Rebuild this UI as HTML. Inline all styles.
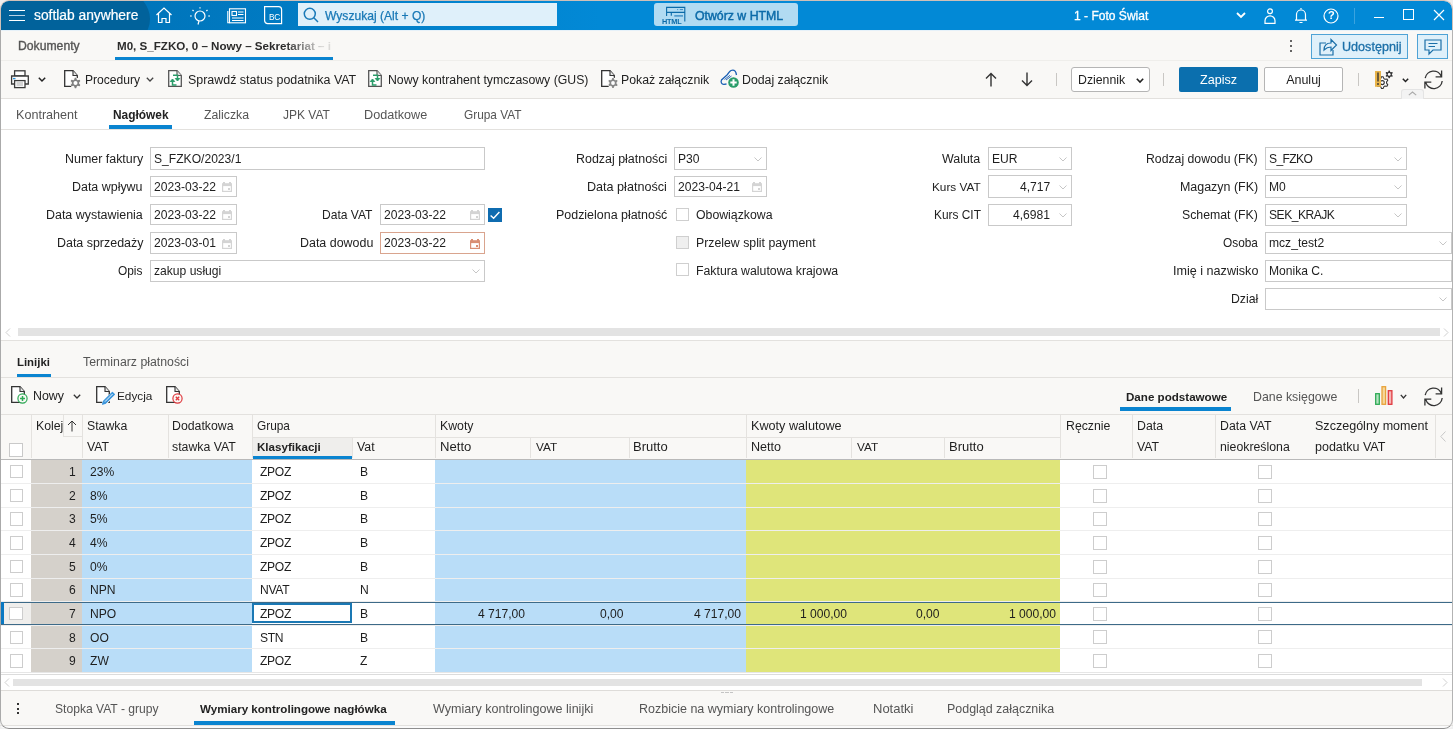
<!DOCTYPE html><html><head><meta charset="utf-8"><style>
html,body{margin:0;padding:0;width:1453px;height:729px;overflow:hidden;background:#efefef;}
#win{position:absolute;left:0;top:0;width:1453px;height:729px;}
.t{position:absolute;white-space:nowrap;font-family:"Liberation Sans", sans-serif;will-change:transform;}
.b{position:absolute;box-sizing:border-box;}
svg{position:absolute;overflow:visible;}
</style></head><body><div id="win">
<div class="b" style="left:0;top:0;width:1453px;height:729px;background:#fff;border-radius:9px;"></div>
<div class="b" style="left:1px;top:1px;width:1451px;height:29px;background:linear-gradient(90deg,#0075bb 149px,#0289d6 599px);border-radius:8px 8px 0 0;"></div>
<div class="b" style="left:1px;top:1px;width:160px;height:29px;overflow:hidden;border-radius:8px 0 0 0;"><div class="b" style="left:-51.5px;top:-32px;width:200px;height:100px;background:#01629b;border-radius:50%;"></div></div>
<div class="b" style="left:0px;top:30px;width:1453px;height:1px;background:#e6f1f9;"></div>
<div class="b" style="left:9px;top:10px;width:16px;height:1.4px;background:#fff;"></div>
<div class="b" style="left:9px;top:15px;width:16px;height:1.4px;background:#b9d3e6;"></div>
<div class="b" style="left:9px;top:20px;width:16px;height:1.4px;background:#fff;"></div>
<div class="t" style="left:34px;top:6.0px;line-height:20px;font-size:13.8px;color:#fff;font-weight:normal;-webkit-text-stroke:0.2px #fff;">softlab anywhere</div>
<svg style="left:155px;top:7px" width="18" height="17" viewBox="0 0 18 17" fill="none" stroke="#fff" stroke-width="1.2">
<path d="M1.5 8 L9 1 L16.5 8 M3.5 6.5 V15.5 H7 V11.5 H11 V15.5 H14.5 V6.5"/></svg>
<svg style="left:189px;top:6px" width="22" height="19" viewBox="0 0 22 19" fill="none" stroke="#fff" stroke-width="1.2">
<circle cx="11" cy="10" r="5"/><path d="M11 1.2 V2.6 M3.5 4 L4.6 5 M18.5 4 L17.4 5 M1 10 H2.8 M19.2 10 H21 M10 15 L9 18.5"/></svg>
<svg style="left:227px;top:8px" width="20" height="16" viewBox="0 0 20 16" fill="none" stroke="#fff" stroke-width="1.1">
<rect x="2.5" y="0.8" width="16" height="14"/><path d="M0.8 3 V14.8 H2.5"/><rect x="5" y="3.5" width="4.5" height="4"/><path d="M11 4 H16.5 M11 6.5 H16.5 M5 10 H16.5 M5 12.5 H16.5"/></svg>
<svg style="left:264px;top:6px" width="19" height="19" viewBox="0 0 19 19" fill="none" stroke="#fff" stroke-width="1.2">
<path d="M0.6 0.6 H14.6 A3 3 0 0 1 17.6 3.6 V17.6 H3.6 A3 3 0 0 1 0.6 14.6 Z"/></svg>
<div class="t" style="left:269.2px;top:7.399999999999999px;line-height:20px;font-size:8.3px;color:#fff;font-weight:normal;letter-spacing:-0.4px;">BC</div>
<div class="b" style="left:298px;top:3px;width:259px;height:23px;background:#dff0fa;"></div>
<svg style="left:303px;top:7px" width="16" height="16" viewBox="0 0 16 16" fill="none" stroke="#1a7ab8" stroke-width="1.5">
<circle cx="6.8" cy="6.8" r="5.5"/><path d="M10.8 10.8 L15 15"/></svg>
<div class="t" style="left:325px;top:5.5px;line-height:20px;font-size:12.1px;color:#1878b6;font-weight:normal;-webkit-text-stroke:0.25px #1878b6;">Wyszukaj (Alt + Q)</div>
<div class="b" style="left:654px;top:3px;width:144px;height:23px;background:#b1dbf2;border-radius:3px;"></div>
<svg style="left:660px;top:5px" width="28" height="22" viewBox="0 0 28 22" fill="none" stroke="#0b6aa8" stroke-width="1.1">
<path d="M6.6 10.9 V2.4 H24.8 V16.6 M6.6 7.4 H24.8 M11.3 7.4 V10.8"/><path d="M14.3 10.9 H23" stroke="#3b8cc4" stroke-width="1.4"/><path d="M17.2 4.6 H18.2 M19.8 4.6 H23" stroke="#3b8cc4" stroke-width="1"/></svg>
<div class="t" style="left:662.3px;top:11.600000000000001px;line-height:20px;font-size:7.3px;color:#0b6aa8;font-weight:bold;letter-spacing:-0.2px;">HTML</div>
<div class="t" style="left:695px;top:5.5px;line-height:20px;font-size:12.3px;color:#0b6aa8;font-weight:normal;-webkit-text-stroke:0.45px #0b6aa8;">Otwórz w HTML</div>
<div class="t" style="left:1073.5px;top:5.5px;line-height:20px;font-size:12.05px;color:#fff;font-weight:normal;-webkit-text-stroke:0.3px #fff;">1 - Foto Świat</div>
<svg style="left:1236px;top:12px" width="10" height="7" viewBox="0 0 10 7" fill="none" stroke="#fff" stroke-width="1.8"><path d="M1 1 L5 5 L9 1"/></svg>
<svg style="left:1263px;top:7px" width="14" height="17" viewBox="0 0 14 17" fill="none" stroke="#fff" stroke-width="1.2">
<circle cx="7" cy="4.3" r="2.4"/><path d="M2 16.3 V13.8 A5 5 0 0 1 12 13.8 V16.3 Z"/></svg>
<svg style="left:1294px;top:7px" width="14" height="17" viewBox="0 0 14 17" fill="none" stroke="#fff" stroke-width="1.2">
<path d="M7 1 V2.2 M2.5 13 V7.5 A4.5 4.5 0 0 1 11.5 7.5 V13 M1 13.2 H13 M5.5 15.5 H8.5"/></svg>
<svg style="left:1323px;top:7.8px" width="16" height="16" viewBox="0 0 16 16" fill="none" stroke="#fff" stroke-width="1.2">
<circle cx="8" cy="8" r="7"/></svg>
<div class="t" style="left:1327.5px;top:5.0px;line-height:20px;font-size:11px;color:#fff;font-weight:bold;">?</div>
<div class="b" style="left:1354px;top:8px;width:1px;height:16px;background:#3aa3df;"></div>
<div class="b" style="left:1374px;top:17px;width:10px;height:1.3px;background:#fff;"></div>
<div class="b" style="left:1403px;top:9px;width:11px;height:11px;border:1.3px solid #fff;"></div>
<svg style="left:1433px;top:9px" width="12" height="12" viewBox="0 0 12 12" fill="none" stroke="#fff" stroke-width="1.2"><path d="M1 1 L11 11 M11 1 L1 11"/></svg>
<div class="b" style="left:0px;top:31px;width:1453px;height:30px;background:#f9f8f6;"></div>
<div class="b" style="left:0px;top:60px;width:1453px;height:1px;background:#efeeeb;"></div>
<div class="t" style="left:18px;top:36.0px;line-height:20px;font-size:12.2px;color:#555;font-weight:normal;-webkit-text-stroke:0.35px #555;">Dokumenty</div>
<div class="t" style="left:117px;top:36.0px;line-height:20px;font-size:11.6px;color:#2b2b2b;font-weight:bold;width:216px;overflow:hidden;-webkit-mask-image:linear-gradient(90deg,#000 78%,rgba(0,0,0,0.15) 95%);">M0, S_FZKO, 0 – Nowy – Sekretariat – i</div>
<div class="b" style="left:115px;top:57px;width:218px;height:3px;background:#0a84d0;"></div>
<div class="b" style="left:1289.5px;top:40px;width:2px;height:2px;background:#333;border-radius:1px;"></div>
<div class="b" style="left:1289.5px;top:45px;width:2px;height:2px;background:#333;border-radius:1px;"></div>
<div class="b" style="left:1289.5px;top:50px;width:2px;height:2px;background:#333;border-radius:1px;"></div>
<div class="b" style="left:1311px;top:34px;width:97px;height:25px;background:#dff0fa;border:1px solid #4fa3d6;"></div>
<svg style="left:1318px;top:37px" width="20" height="19" viewBox="0 0 20 19" fill="none" stroke="#1b6fa8" stroke-width="1.2">
<path d="M8 6 H2 V18 H15 V13 M6 13 C6 8 9 6 13 6 V2.5 L18.5 8 L13 13.5 V10 C10 10 8 11 6 13 Z"/></svg>
<div class="t" style="left:1341.5px;top:36.5px;line-height:20px;font-size:12.6px;color:#1b6fa8;font-weight:normal;-webkit-text-stroke:0.3px #1b6fa8;">Udostępnij</div>
<div class="b" style="left:1417px;top:34px;width:31px;height:25px;background:#dff0fa;border:1px solid #4fa3d6;"></div>
<svg style="left:1424px;top:39px" width="18" height="16" viewBox="0 0 18 16" fill="none" stroke="#1b6fa8" stroke-width="1.2">
<path d="M1 1 H17 V11 H9 L5 15 V11 H1 Z M4.5 4.5 H13.5 M4.5 7.5 H11"/></svg>
<div class="b" style="left:0px;top:61px;width:1453px;height:37px;background:#f9f8f6;"></div>
<div class="b" style="left:0px;top:98px;width:1453px;height:1px;background:#e3e1de;"></div>
<svg style="left:10px;top:70px" width="20" height="19" viewBox="0 0 20 19" fill="none" stroke="#3a3a3a" stroke-width="1.3">
<rect x="4.6" y="0.8" width="10.4" height="5.2" fill="#fff"/><path d="M4.6 14 H1.6 V6 H18.3 V14 H15" fill="#fff"/><rect x="4.6" y="10.6" width="10.4" height="7" fill="#fff"/>
<path d="M6.5 13 H13 M6.5 15 H13" stroke="#aaa" stroke-width="1.2"/><path d="M3 8.6 H5.5" stroke="#2a8fd6" stroke-width="1.4"/></svg>
<svg style="left:38px;top:77px" width="8" height="5" viewBox="0 0 8 5" fill="none" stroke="#222" stroke-width="1.5"><path d="M0.8 0.8 L4.0 4 L7.2 0.8"/></svg>
<svg style="left:64px;top:70px" width="20" height="20" viewBox="0 0 20 20"><path d="M0.7 0.7 H9 L13.3 5.5 V16.3 H0.7 Z" stroke="#333" stroke-width="1.3" fill="#fff"/><path d="M9 0.7 V5.5 H13.3" stroke="#333" stroke-width="1.1" fill="#e6e6e6"/>
<circle cx="11.5" cy="13" r="5.6" fill="#f9f8f6"/><path d="M10.82 7.84 L12.18 7.84 L12.88 9.67 L13.69 10.14 L15.63 9.83 L16.30 11.01 L15.07 12.53 L15.07 13.47 L16.30 14.99 L15.63 16.17 L13.69 15.86 L12.88 16.33 L12.18 18.16 L10.82 18.16 L10.12 16.33 L9.31 15.86 L7.37 16.17 L6.70 14.99 L7.93 13.47 L7.93 12.53 L6.70 11.01 L7.37 9.83 L9.31 10.14 L10.12 9.67 Z" fill="#808080" stroke="#f9f8f6" stroke-width="0"/><circle cx="11.5" cy="13" r="2.0" fill="#fff"/></svg>
<div class="t" style="left:84.5px;top:70.0px;line-height:20px;font-size:12.1px;color:#222;font-weight:normal;">Procedury</div>
<svg style="left:146px;top:77px" width="8" height="5" viewBox="0 0 8 5" fill="none" stroke="#444" stroke-width="1.3"><path d="M0.8 0.8 L4.0 4 L7.2 0.8"/></svg>
<svg style="left:168px;top:70px" width="15" height="18" viewBox="0 0 15 18"><path d="M0.7 0.7 H9 L13.3 5.5 V16.3 H0.7 Z" stroke="#555" stroke-width="1.3" fill="#fff"/><path d="M9 0.7 V5.5 H13.3" stroke="#555" stroke-width="1.1" fill="#e6e6e6"/>
<path d="M5 5.3 H9.5 V9" stroke="#2a9d6a" stroke-width="1.5" fill="none"/><path d="M7.3 8.5 L9.5 11 L11.7 8.5 Z" fill="#2a9d6a" stroke="#2a9d6a" stroke-width="1"/>
<path d="M8.5 15 H4.5 V11" stroke="#2a9d6a" stroke-width="1.5" fill="none"/><path d="M2.3 11.5 L4.5 9 L6.7 11.5 Z" fill="#2a9d6a" stroke="#2a9d6a" stroke-width="1"/></svg>
<div class="t" style="left:188px;top:70.0px;line-height:20px;font-size:12.45px;color:#222;font-weight:normal;">Sprawdź status podatnika VAT</div>
<svg style="left:368px;top:70px" width="15" height="18" viewBox="0 0 15 18"><path d="M0.7 0.7 H9 L13.3 5.5 V16.3 H0.7 Z" stroke="#555" stroke-width="1.3" fill="#fff"/><path d="M9 0.7 V5.5 H13.3" stroke="#555" stroke-width="1.1" fill="#e6e6e6"/>
<path d="M5 5.3 H9.5 V9" stroke="#2a9d6a" stroke-width="1.5" fill="none"/><path d="M7.3 8.5 L9.5 11 L11.7 8.5 Z" fill="#2a9d6a" stroke="#2a9d6a" stroke-width="1"/>
<path d="M8.5 15 H4.5 V11" stroke="#2a9d6a" stroke-width="1.5" fill="none"/><path d="M2.3 11.5 L4.5 9 L6.7 11.5 Z" fill="#2a9d6a" stroke="#2a9d6a" stroke-width="1"/></svg>
<div class="t" style="left:388px;top:70.0px;line-height:20px;font-size:12.28px;color:#222;font-weight:normal;">Nowy kontrahent tymczasowy (GUS)</div>
<svg style="left:601px;top:70px" width="20" height="20" viewBox="0 0 20 20"><path d="M0.7 0.7 H9 L13.3 5.5 V16.3 H0.7 Z" stroke="#333" stroke-width="1.3" fill="#fff"/><path d="M9 0.7 V5.5 H13.3" stroke="#333" stroke-width="1.1" fill="#e6e6e6"/>
<circle cx="12" cy="13" r="5.6" fill="#f9f8f6"/><path d="M11.35 8.04 L12.65 8.04 L13.34 9.77 L14.13 10.22 L15.97 9.96 L16.62 11.09 L15.47 12.54 L15.47 13.46 L16.62 14.91 L15.97 16.04 L14.13 15.78 L13.34 16.23 L12.65 17.96 L11.35 17.96 L10.66 16.23 L9.87 15.78 L8.03 16.04 L7.38 14.91 L8.53 13.46 L8.53 12.54 L7.38 11.09 L8.03 9.96 L9.87 10.22 L10.66 9.77 Z" fill="#888" stroke="#f9f8f6" stroke-width="0"/><circle cx="12" cy="13" r="1.9" fill="#fff"/></svg>
<div class="t" style="left:621px;top:70.0px;line-height:20px;font-size:12.3px;color:#222;font-weight:normal;">Pokaż załącznik</div>
<svg style="left:720px;top:69px" width="20" height="19" viewBox="0 0 20 19" fill="none">
<path d="M6.5 15 L4 15.3 C1.5 15.5 0.5 13 1.5 11 L7 6 C8.5 4.5 9 2.5 11 1.5 C13 0.7 15.5 1 16 4 L16.5 6" stroke="#1a5fb4" stroke-width="1.3"/>
<path d="M4.5 10.5 L10 6.3 M6 11 L11.5 7" stroke="#1a5fb4" stroke-width="0.9"/>
<circle cx="13.5" cy="13.5" r="5.3" fill="#2a9d6a"/><path d="M13.5 10.3 V16.7 M10.3 13.5 H16.7" stroke="#fff" stroke-width="2"/></svg>
<div class="t" style="left:742px;top:70.0px;line-height:20px;font-size:12.3px;color:#222;font-weight:normal;">Dodaj załącznik</div>
<svg style="left:985px;top:72px" width="12" height="15" viewBox="0 0 12 15" fill="none" stroke="#333" stroke-width="1.4"><path d="M6 14.5 V1.5 M1 6.5 L6 1.5 L11 6.5"/></svg>
<svg style="left:1021px;top:72px" width="12" height="15" viewBox="0 0 12 15" fill="none" stroke="#333" stroke-width="1.4"><path d="M6 0.5 V13.5 M1 8.5 L6 13.5 L11 8.5"/></svg>
<div class="b" style="left:1056px;top:73px;width:1px;height:13px;background:#c9c7c4;"></div>
<div class="b" style="left:1071px;top:67px;width:79px;height:25px;background:#fff;border:1px solid #b5b5b5;border-radius:3px;"></div>
<div class="t" style="left:1077.5px;top:70.2px;line-height:20px;font-size:12.3px;color:#1e1e1e;font-weight:normal;">Dziennik</div>
<svg style="left:1136px;top:78px" width="8" height="5" viewBox="0 0 8 5" fill="none" stroke="#222" stroke-width="1.6"><path d="M0.8 0.8 L4.0 4 L7.2 0.8"/></svg>
<div class="b" style="left:1163px;top:73px;width:1px;height:13px;background:#c9c7c4;"></div>
<div class="b" style="left:1179px;top:67px;width:79px;height:25px;background:#0b6fae;border-radius:2px;"></div>
<div class="t" style="left:1179px;top:70.0px;line-height:20px;font-size:12.6px;color:#fff;font-weight:normal;width:79px;text-align:center;">Zapisz</div>
<div class="b" style="left:1264px;top:67px;width:79px;height:25px;background:#fff;border:1px solid #b5b5b5;border-radius:2px;"></div>
<div class="t" style="left:1264px;top:70.0px;line-height:20px;font-size:12.5px;color:#1e1e1e;font-weight:normal;width:79px;text-align:center;">Anuluj</div>
<div class="b" style="left:1358px;top:73px;width:1px;height:13px;background:#c9c7c4;"></div>
<svg style="left:1374px;top:70px" width="22" height="19" viewBox="0 0 22 19">
<path d="M7.53 6.75 L9.07 6.75 L9.95 8.63 L10.92 9.19 L12.98 9.01 L13.75 10.34 L12.56 12.04 L12.56 13.16 L13.75 14.86 L12.98 16.19 L10.92 16.01 L9.95 16.57 L9.07 18.45 L7.53 18.45 L6.65 16.57 L5.68 16.01 L3.62 16.19 L2.85 14.86 L4.04 13.16 L4.04 12.04 L2.85 10.34 L3.62 9.01 L5.68 9.19 L6.65 8.63 Z" fill="#fff" stroke="#333" stroke-width="1.1"/><circle cx="8.3" cy="12.6" r="2" fill="none" stroke="#333" stroke-width="1.1"/><path d="M14.69 0.53 L15.71 0.53 L16.23 1.91 L16.84 2.26 L18.29 2.03 L18.80 2.91 L17.88 4.05 L17.88 4.75 L18.80 5.89 L18.29 6.77 L16.84 6.54 L16.23 6.89 L15.71 8.27 L14.69 8.27 L14.17 6.89 L13.56 6.54 L12.11 6.77 L11.60 5.89 L12.52 4.75 L12.52 4.05 L11.60 2.91 L12.11 2.03 L13.56 2.26 L14.17 1.91 Z" fill="#333"/><circle cx="15.2" cy="4.4" r="1.4" fill="#fff"/>
<circle cx="8.3" cy="12.6" r="3.1" fill="none" stroke="#fff" stroke-width="0"/>
<rect x="1" y="1" width="6" height="15.8" fill="#e8b44a"/><rect x="3" y="2.5" width="2" height="9" fill="#6b5a3a"/><rect x="3" y="13" width="2" height="2" fill="#6b5a3a"/></svg>
<svg style="left:1402px;top:78px" width="7" height="4.5" viewBox="0 0 7 4.5" fill="none" stroke="#222" stroke-width="1.5"><path d="M0.8 0.8 L3.5 3.5 L6.2 0.8"/></svg>
<svg style="left:1424px;top:70px" width="20" height="20" viewBox="0 0 20 20" fill="none" stroke="#333" stroke-width="1.3">
<path d="M1.2 8.2 A8.4 8.4 0 0 1 17.4 6.6 M18.2 11 A8.4 8.4 0 0 1 1.8 12.6 M17.6 0.6 V6.8 H11.6 M0.9 18.6 V12.1 H7.3"/></svg>
<div class="b" style="left:1401px;top:89px;width:23px;height:10px;background:#f3f3f3;border:1px solid #e4e4e4;border-bottom:none;border-radius:3px 3px 0 0;"></div>
<svg style="left:1408px;top:91px" width="9" height="5" viewBox="0 0 9 5" fill="none" stroke="#aaa" stroke-width="1.1"><path d="M0.8 4.2 L4.5 1 L8.2 4.2"/></svg>
<div class="b" style="left:0px;top:99px;width:1453px;height:30px;background:#fff;"></div>
<div class="b" style="left:0px;top:129px;width:1453px;height:1px;background:#e3e1de;"></div>
<div class="t" style="left:15.5px;top:105.0px;line-height:20px;font-size:12.6px;color:#555;font-weight:normal;">Kontrahent</div>
<div class="t" style="left:204px;top:105.0px;line-height:20px;font-size:12.3px;color:#555;font-weight:normal;">Zaliczka</div>
<div class="t" style="left:283px;top:105.0px;line-height:20px;font-size:12.0px;color:#555;font-weight:normal;">JPK VAT</div>
<div class="t" style="left:364px;top:105.0px;line-height:20px;font-size:12.65px;color:#555;font-weight:normal;">Dodatkowe</div>
<div class="t" style="left:463.5px;top:105.0px;line-height:20px;font-size:11.85px;color:#555;font-weight:normal;">Grupa VAT</div>
<div class="t" style="left:112.5px;top:105.0px;line-height:20px;font-size:11.9px;color:#222;font-weight:bold;">Nagłówek</div>
<div class="b" style="left:109px;top:125px;width:63px;height:4px;background:#0a84d0;"></div>
<div class="t" style="right:1310px;top:149.0px;line-height:20px;font-size:12.45px;color:#222;font-weight:normal;text-align:right;">Numer faktury</div>
<div class="b" style="left:150px;top:147px;width:335px;height:23px;background:#fff;border:1px solid #c9c9c9;"></div>
<div class="t" style="left:154px;top:148.5px;line-height:20px;font-size:12.1px;color:#1e1e1e;font-weight:normal;letter-spacing:0px;">S_FZKO/2023/1</div>
<div class="t" style="right:1310px;top:177.0px;line-height:20px;font-size:12.45px;color:#222;font-weight:normal;text-align:right;">Data wpływu</div>
<div class="b" style="left:150px;top:176px;width:87px;height:21px;background:#fff;border:1px solid #c9c9c9;"></div>
<div class="t" style="left:154px;top:176.5px;line-height:20px;font-size:12.1px;color:#1e1e1e;font-weight:normal;letter-spacing:0px;">2023-03-22</div>
<svg style="left:222px;top:182.0px" width="10" height="10" viewBox="0 0 10 10" fill="none">
<rect x="0.6" y="2" width="8.8" height="7.4" stroke="#d4d4d4" stroke-width="1.2"/><rect x="0" y="1.5" width="10" height="2.6" fill="#d4d4d4"/><rect x="1" y="0" width="2" height="2" fill="#d4d4d4"/><rect x="7" y="0" width="2" height="2" fill="#d4d4d4"/><rect x="6" y="6" width="2" height="2" fill="#d4d4d4"/></svg>
<div class="t" style="right:1310px;top:205.0px;line-height:20px;font-size:12.45px;color:#222;font-weight:normal;text-align:right;">Data wystawienia</div>
<div class="b" style="left:150px;top:204px;width:87px;height:21px;background:#fff;border:1px solid #c9c9c9;"></div>
<div class="t" style="left:154px;top:204.5px;line-height:20px;font-size:12.1px;color:#1e1e1e;font-weight:normal;letter-spacing:0px;">2023-03-22</div>
<svg style="left:222px;top:210.0px" width="10" height="10" viewBox="0 0 10 10" fill="none">
<rect x="0.6" y="2" width="8.8" height="7.4" stroke="#d4d4d4" stroke-width="1.2"/><rect x="0" y="1.5" width="10" height="2.6" fill="#d4d4d4"/><rect x="1" y="0" width="2" height="2" fill="#d4d4d4"/><rect x="7" y="0" width="2" height="2" fill="#d4d4d4"/><rect x="6" y="6" width="2" height="2" fill="#d4d4d4"/></svg>
<div class="t" style="right:1310px;top:233.0px;line-height:20px;font-size:12.45px;color:#222;font-weight:normal;text-align:right;">Data sprzedaży</div>
<div class="b" style="left:150px;top:232px;width:87px;height:22px;background:#fff;border:1px solid #c9c9c9;"></div>
<div class="t" style="left:154px;top:233.0px;line-height:20px;font-size:12.1px;color:#1e1e1e;font-weight:normal;letter-spacing:0px;">2023-03-01</div>
<svg style="left:222px;top:238.5px" width="10" height="10" viewBox="0 0 10 10" fill="none">
<rect x="0.6" y="2" width="8.8" height="7.4" stroke="#d4d4d4" stroke-width="1.2"/><rect x="0" y="1.5" width="10" height="2.6" fill="#d4d4d4"/><rect x="1" y="0" width="2" height="2" fill="#d4d4d4"/><rect x="7" y="0" width="2" height="2" fill="#d4d4d4"/><rect x="6" y="6" width="2" height="2" fill="#d4d4d4"/></svg>
<div class="t" style="right:1310.5px;top:261.0px;line-height:20px;font-size:11.9px;color:#222;font-weight:normal;text-align:right;">Opis</div>
<div class="b" style="left:150px;top:260px;width:335px;height:22px;background:#fff;border:1px solid #c9c9c9;"></div>
<div class="t" style="left:154px;top:261.0px;line-height:20px;font-size:12.1px;color:#1e1e1e;font-weight:normal;letter-spacing:0px;">zakup usługi</div>
<svg style="left:471.5px;top:269.0px" width="8" height="5" viewBox="0 0 8 5" fill="none" stroke="#c6c6c6" stroke-width="1"><path d="M0.5 0.5 L4 4 L7.5 0.5"/></svg>
<div class="t" style="right:1080.5px;top:205.0px;line-height:20px;font-size:12.05px;color:#222;font-weight:normal;text-align:right;">Data VAT</div>
<div class="b" style="left:380px;top:204px;width:105px;height:21px;background:#fff;border:1px solid #c9c9c9;"></div>
<div class="t" style="left:384px;top:204.5px;line-height:20px;font-size:12.1px;color:#1e1e1e;font-weight:normal;letter-spacing:0px;">2023-03-22</div>
<svg style="left:470px;top:210.0px" width="10" height="10" viewBox="0 0 10 10" fill="none">
<rect x="0.6" y="2" width="8.8" height="7.4" stroke="#d4d4d4" stroke-width="1.2"/><rect x="0" y="1.5" width="10" height="2.6" fill="#d4d4d4"/><rect x="1" y="0" width="2" height="2" fill="#d4d4d4"/><rect x="7" y="0" width="2" height="2" fill="#d4d4d4"/><rect x="6" y="6" width="2" height="2" fill="#d4d4d4"/></svg>
<div class="t" style="right:1080px;top:233.0px;line-height:20px;font-size:12.45px;color:#222;font-weight:normal;text-align:right;">Data dowodu</div>
<div class="b" style="left:380px;top:232px;width:105px;height:22px;background:#fff;border:1px solid #d9a48e;"></div>
<div class="t" style="left:384px;top:233.0px;line-height:20px;font-size:12.1px;color:#1e1e1e;font-weight:normal;letter-spacing:0px;">2023-03-22</div>
<svg style="left:470px;top:238.5px" width="10" height="10" viewBox="0 0 10 10" fill="none">
<rect x="0.6" y="2" width="8.8" height="7.4" stroke="#d98f74" stroke-width="1.2"/><rect x="0" y="1.5" width="10" height="2.6" fill="#d98f74"/><rect x="1" y="0" width="2" height="2" fill="#d98f74"/><rect x="7" y="0" width="2" height="2" fill="#d98f74"/><rect x="6" y="6" width="2" height="2" fill="#d98f74"/></svg>
<div class="b" style="left:488px;top:208px;width:14px;height:14px;background:#0f6cb0;"></div>
<svg style="left:490px;top:210px" width="10" height="10" viewBox="0 0 10 10" fill="none" stroke="#fff" stroke-width="1.4"><path d="M0.6 5.6 L3.6 8.3 L9.4 2"/></svg>
<div class="t" style="right:786px;top:149.0px;line-height:20px;font-size:12.45px;color:#222;font-weight:normal;text-align:right;">Rodzaj płatności</div>
<div class="b" style="left:674px;top:147px;width:93px;height:23px;background:#fff;border:1px solid #c9c9c9;"></div>
<div class="t" style="left:678px;top:148.5px;line-height:20px;font-size:12.1px;color:#1e1e1e;font-weight:normal;letter-spacing:0px;">P30</div>
<svg style="left:753.5px;top:156.5px" width="8" height="5" viewBox="0 0 8 5" fill="none" stroke="#c6c6c6" stroke-width="1"><path d="M0.5 0.5 L4 4 L7.5 0.5"/></svg>
<div class="t" style="right:786px;top:177.0px;line-height:20px;font-size:12.6px;color:#222;font-weight:normal;text-align:right;">Data płatności</div>
<div class="b" style="left:674px;top:176px;width:93px;height:21px;background:#fff;border:1px solid #c9c9c9;"></div>
<div class="t" style="left:678px;top:176.5px;line-height:20px;font-size:12.1px;color:#1e1e1e;font-weight:normal;letter-spacing:0px;">2023-04-21</div>
<svg style="left:752px;top:182.0px" width="10" height="10" viewBox="0 0 10 10" fill="none">
<rect x="0.6" y="2" width="8.8" height="7.4" stroke="#d4d4d4" stroke-width="1.2"/><rect x="0" y="1.5" width="10" height="2.6" fill="#d4d4d4"/><rect x="1" y="0" width="2" height="2" fill="#d4d4d4"/><rect x="7" y="0" width="2" height="2" fill="#d4d4d4"/><rect x="6" y="6" width="2" height="2" fill="#d4d4d4"/></svg>
<div class="t" style="right:786px;top:205.0px;line-height:20px;font-size:12.45px;color:#222;font-weight:normal;text-align:right;">Podzielona płatność</div>
<div class="b" style="left:676px;top:208px;width:13px;height:13px;background:#fff;border:1px solid #cfcfcf;"></div>
<div class="t" style="left:696px;top:205.0px;line-height:20px;font-size:12.3px;color:#222;font-weight:normal;">Obowiązkowa</div>
<div class="b" style="left:676px;top:236px;width:13px;height:13px;background:#efefef;border:1px solid #cfcfcf;"></div>
<div class="t" style="left:696px;top:233.0px;line-height:20px;font-size:12.3px;color:#222;font-weight:normal;">Przelew split payment</div>
<div class="b" style="left:676px;top:263px;width:13px;height:13px;background:#fff;border:1px solid #cfcfcf;"></div>
<div class="t" style="left:696px;top:260.5px;line-height:20px;font-size:12.3px;color:#222;font-weight:normal;">Faktura walutowa krajowa</div>
<div class="t" style="right:473px;top:149.0px;line-height:20px;font-size:12.45px;color:#222;font-weight:normal;text-align:right;">Waluta</div>
<div class="b" style="left:988px;top:147px;width:84px;height:23px;background:#fff;border:1px solid #c9c9c9;"></div>
<div class="t" style="left:992px;top:148.5px;line-height:20px;font-size:12.1px;color:#1e1e1e;font-weight:normal;letter-spacing:0px;">EUR</div>
<svg style="left:1058.5px;top:156.5px" width="8" height="5" viewBox="0 0 8 5" fill="none" stroke="#c6c6c6" stroke-width="1"><path d="M0.5 0.5 L4 4 L7.5 0.5"/></svg>
<div class="t" style="right:472.5px;top:177.0px;line-height:20px;font-size:11.8px;color:#222;font-weight:normal;text-align:right;">Kurs VAT</div>
<div class="b" style="left:988px;top:175px;width:84px;height:23px;background:#fff;border:1px solid #c9c9c9;"></div>
<div class="t" style="right:403px;top:176.5px;line-height:20px;font-size:12.1px;color:#1e1e1e;font-weight:normal;text-align:right;">4,717</div>
<svg style="left:1058.5px;top:184.5px" width="8" height="5" viewBox="0 0 8 5" fill="none" stroke="#c6c6c6" stroke-width="1"><path d="M0.5 0.5 L4 4 L7.5 0.5"/></svg>
<div class="t" style="right:472.5px;top:205.0px;line-height:20px;font-size:11.9px;color:#222;font-weight:normal;text-align:right;">Kurs CIT</div>
<div class="b" style="left:988px;top:204px;width:84px;height:22px;background:#fff;border:1px solid #c9c9c9;"></div>
<div class="t" style="right:403px;top:205.0px;line-height:20px;font-size:12.1px;color:#1e1e1e;font-weight:normal;text-align:right;">4,6981</div>
<svg style="left:1058.5px;top:213.0px" width="8" height="5" viewBox="0 0 8 5" fill="none" stroke="#c6c6c6" stroke-width="1"><path d="M0.5 0.5 L4 4 L7.5 0.5"/></svg>
<div class="t" style="right:195px;top:149.0px;line-height:20px;font-size:12.25px;color:#222;font-weight:normal;text-align:right;">Rodzaj dowodu (FK)</div>
<div class="b" style="left:1265px;top:147px;width:142px;height:23px;background:#fff;border:1px solid #c9c9c9;"></div>
<div class="t" style="left:1269px;top:148.5px;line-height:20px;font-size:12.1px;color:#1e1e1e;font-weight:normal;letter-spacing:-0.65px;">S_FZKO</div>
<svg style="left:1393.5px;top:156.5px" width="8" height="5" viewBox="0 0 8 5" fill="none" stroke="#c6c6c6" stroke-width="1"><path d="M0.5 0.5 L4 4 L7.5 0.5"/></svg>
<div class="t" style="right:195px;top:177.0px;line-height:20px;font-size:12.45px;color:#222;font-weight:normal;text-align:right;">Magazyn (FK)</div>
<div class="b" style="left:1265px;top:175px;width:142px;height:23px;background:#fff;border:1px solid #c9c9c9;"></div>
<div class="t" style="left:1269px;top:176.5px;line-height:20px;font-size:12.1px;color:#1e1e1e;font-weight:normal;letter-spacing:0px;">M0</div>
<svg style="left:1393.5px;top:184.5px" width="8" height="5" viewBox="0 0 8 5" fill="none" stroke="#c6c6c6" stroke-width="1"><path d="M0.5 0.5 L4 4 L7.5 0.5"/></svg>
<div class="t" style="right:195px;top:205.0px;line-height:20px;font-size:12.3px;color:#222;font-weight:normal;text-align:right;">Schemat (FK)</div>
<div class="b" style="left:1265px;top:204px;width:142px;height:22px;background:#fff;border:1px solid #c9c9c9;"></div>
<div class="t" style="left:1269px;top:205.0px;line-height:20px;font-size:12.1px;color:#1e1e1e;font-weight:normal;letter-spacing:-0.5px;">SEK_KRAJK</div>
<svg style="left:1393.5px;top:213.0px" width="8" height="5" viewBox="0 0 8 5" fill="none" stroke="#c6c6c6" stroke-width="1"><path d="M0.5 0.5 L4 4 L7.5 0.5"/></svg>
<div class="t" style="right:195px;top:233.0px;line-height:20px;font-size:11.85px;color:#222;font-weight:normal;text-align:right;">Osoba</div>
<div class="b" style="left:1265px;top:232px;width:187px;height:22px;background:#fff;border:1px solid #c9c9c9;"></div>
<div class="t" style="left:1269px;top:233.0px;line-height:20px;font-size:12.1px;color:#1e1e1e;font-weight:normal;letter-spacing:0px;">mcz_test2</div>
<svg style="left:1438.5px;top:241.0px" width="8" height="5" viewBox="0 0 8 5" fill="none" stroke="#c6c6c6" stroke-width="1"><path d="M0.5 0.5 L4 4 L7.5 0.5"/></svg>
<div class="t" style="right:195px;top:261.0px;line-height:20px;font-size:12.6px;color:#222;font-weight:normal;text-align:right;">Imię i nazwisko</div>
<div class="b" style="left:1265px;top:260px;width:187px;height:22px;background:#fff;border:1px solid #c9c9c9;"></div>
<div class="t" style="left:1269px;top:261.0px;line-height:20px;font-size:12.1px;color:#1e1e1e;font-weight:normal;letter-spacing:0px;">Monika C.</div>
<div class="t" style="right:195px;top:289.0px;line-height:20px;font-size:12.25px;color:#222;font-weight:normal;text-align:right;">Dział</div>
<div class="b" style="left:1265px;top:288px;width:187px;height:22px;background:#fff;border:1px solid #c9c9c9;"></div>
<svg style="left:1438.5px;top:297.0px" width="8" height="5" viewBox="0 0 8 5" fill="none" stroke="#c6c6c6" stroke-width="1"><path d="M0.5 0.5 L4 4 L7.5 0.5"/></svg>
<div class="b" style="left:18px;top:328px;width:1422px;height:8px;background:#e3e3e3;"></div>
<svg style="left:5px;top:328px" width="6" height="9" viewBox="0 0 6 9" fill="none" stroke="#d0d0d0" stroke-width="1"><path d="M5 0.5 L1 4.5 L5 8.5"/></svg>
<svg style="left:1443px;top:328px" width="6" height="9" viewBox="0 0 6 9" fill="none" stroke="#d0d0d0" stroke-width="1"><path d="M1 0.5 L5 4.5 L1 8.5"/></svg>
<div class="b" style="left:0px;top:340px;width:1453px;height:1px;background:#e3e1de;"></div>
<div class="b" style="left:0px;top:341px;width:1453px;height:73px;background:#f9f8f6;"></div>
<div class="t" style="left:16.5px;top:352.0px;line-height:20px;font-size:11.4px;color:#222;font-weight:bold;">Linijki</div>
<div class="t" style="left:83px;top:352.0px;line-height:20px;font-size:12.3px;color:#555;font-weight:normal;">Terminarz płatności</div>
<div class="b" style="left:17px;top:374px;width:34px;height:4px;background:#0a84d0;"></div>
<div class="b" style="left:0px;top:377px;width:1453px;height:1px;background:#e3e1de;"></div>
<svg style="left:11px;top:386px" width="19" height="18" viewBox="0 0 19 18"><path d="M0.7 0.7 H9 L13.3 5.5 V16.3 H0.7 Z" stroke="#333" stroke-width="1.3" fill="#fff"/><path d="M9 0.7 V5.5 H13.3" stroke="#333" stroke-width="1.1" fill="#e6e6e6"/>
<circle cx="11.5" cy="12.5" r="4.6" fill="#f9f8f6" stroke="#2eaa55" stroke-width="1.2"/><path d="M11.5 10 V15 M9 12.5 H14" stroke="#2eaa55" stroke-width="1.5"/></svg>
<div class="t" style="left:33px;top:386.0px;line-height:20px;font-size:12.4px;color:#222;font-weight:normal;">Nowy</div>
<svg style="left:73px;top:394px" width="8" height="5" viewBox="0 0 8 5" fill="none" stroke="#333" stroke-width="1.3"><path d="M0.8 0.8 L4.0 4 L7.2 0.8"/></svg>
<svg style="left:96px;top:386px" width="20" height="20" viewBox="0 0 20 20"><path d="M0.7 0.7 H9 L13.3 5.5 V16.3 H0.7 Z" stroke="#333" stroke-width="1.3" fill="#fff"/><path d="M9 0.7 V5.5 H13.3" stroke="#333" stroke-width="1.1" fill="#e6e6e6"/>
<path d="M7.5 17.8 L17.8 7.5" stroke="#f9f8f6" stroke-width="5"/><path d="M6.6 18.2 L7.6 15.2 L16.4 6.4 L18.4 8.4 L9.6 17.2 Z" fill="#3c96dc" stroke="#3c96dc" stroke-width="1.2" stroke-linejoin="round"/><path d="M9 15.6 L16.6 8" stroke="#fff" stroke-width="0.9"/></svg>
<div class="t" style="left:116.5px;top:386.0px;line-height:20px;font-size:11.8px;color:#222;font-weight:normal;">Edycja</div>
<svg style="left:166px;top:386px" width="19" height="18" viewBox="0 0 19 18"><path d="M0.7 0.7 H9 L13.3 5.5 V16.3 H0.7 Z" stroke="#333" stroke-width="1.3" fill="#fff"/><path d="M9 0.7 V5.5 H13.3" stroke="#333" stroke-width="1.1" fill="#e6e6e6"/>
<circle cx="11.5" cy="12.5" r="4.6" fill="#f9f8f6" stroke="#e0393e" stroke-width="1.2"/><path d="M9.8 10.8 L13.2 14.2 M13.2 10.8 L9.8 14.2" stroke="#e0393e" stroke-width="1.3"/></svg>
<div class="t" style="left:1125.5px;top:386.8px;line-height:20px;font-size:11.6px;color:#222;font-weight:bold;">Dane podstawowe</div>
<div class="b" style="left:1120px;top:407px;width:111px;height:4px;background:#0a84d0;"></div>
<div class="t" style="left:1253px;top:386.8px;line-height:20px;font-size:12.35px;color:#555;font-weight:normal;">Dane księgowe</div>
<div class="b" style="left:1358px;top:389px;width:1px;height:14px;background:#c9c7c4;"></div>
<svg style="left:1375px;top:386px" width="20" height="19" viewBox="0 0 20 19">
<rect x="0.7" y="7.7" width="3.6" height="10.6" fill="#b5e3c2" stroke="#2eaa55" stroke-width="1.3"/>
<rect x="7" y="0.7" width="3.6" height="17.6" fill="#f6d69a" stroke="#e8a23a" stroke-width="1.3"/>
<rect x="13.3" y="4.7" width="3.6" height="13.6" fill="#f5b5b5" stroke="#e0393e" stroke-width="1.3"/></svg>
<svg style="left:1400px;top:394px" width="7" height="5" viewBox="0 0 7 5" fill="none" stroke="#333" stroke-width="1.3"><path d="M0.8 0.8 L3.5 4 L6.2 0.8"/></svg>
<svg style="left:1424px;top:387px" width="20" height="20" viewBox="0 0 20 20" fill="none" stroke="#333" stroke-width="1.3">
<path d="M1.2 8.2 A8.4 8.4 0 0 1 17.4 6.6 M18.2 11 A8.4 8.4 0 0 1 1.8 12.6 M17.6 0.6 V6.8 H11.6 M0.9 18.6 V12.1 H7.3"/></svg>
<div class="b" style="left:0px;top:414px;width:1453px;height:1px;background:#e3e1de;"></div>
<div class="b" style="left:0px;top:415px;width:1453px;height:44px;background:#f9f8f6;"></div>
<div class="b" style="left:0px;top:458.6px;width:1453px;height:1.4px;background:#b9b9b9;"></div>
<div class="b" style="left:31px;top:415px;width:1px;height:43px;background:#e4e2df;"></div>
<div class="b" style="left:82px;top:415px;width:1px;height:43px;background:#e4e2df;"></div>
<div class="b" style="left:168px;top:415px;width:1px;height:43px;background:#e4e2df;"></div>
<div class="b" style="left:252px;top:415px;width:1px;height:43px;background:#e4e2df;"></div>
<div class="b" style="left:435px;top:415px;width:1px;height:43px;background:#e4e2df;"></div>
<div class="b" style="left:746px;top:415px;width:1px;height:43px;background:#e4e2df;"></div>
<div class="b" style="left:1060px;top:415px;width:1px;height:43px;background:#e4e2df;"></div>
<div class="b" style="left:1132px;top:415px;width:1px;height:43px;background:#e4e2df;"></div>
<div class="b" style="left:1215px;top:415px;width:1px;height:43px;background:#e4e2df;"></div>
<div class="b" style="left:1435px;top:415px;width:1px;height:43px;background:#e4e2df;"></div>
<div class="b" style="left:352px;top:437px;width:1px;height:21px;background:#e4e2df;"></div>
<div class="b" style="left:530px;top:437px;width:1px;height:21px;background:#e4e2df;"></div>
<div class="b" style="left:629px;top:437px;width:1px;height:21px;background:#e4e2df;"></div>
<div class="b" style="left:851px;top:437px;width:1px;height:21px;background:#e4e2df;"></div>
<div class="b" style="left:944px;top:437px;width:1px;height:21px;background:#e4e2df;"></div>
<div class="b" style="left:252px;top:437px;width:808px;height:1px;background:#e4e2df;"></div>
<div class="b" style="left:253px;top:438px;width:99px;height:20px;background:#efeeec;"></div>
<div class="b" style="left:253px;top:456px;width:99px;height:2.5px;background:#0a84d0;"></div>
<div class="b" style="left:63px;top:415px;width:19px;height:22px;border-left:1px solid #e4e2df;border-bottom:1px solid #e4e2df;"></div>
<svg style="left:67px;top:420px" width="10" height="12" viewBox="0 0 10 12" fill="none" stroke="#333" stroke-width="1"><path d="M5 11.5 V1 M1 5 L5 1 L9 5"/></svg>
<div class="t" style="left:36px;top:416.0px;line-height:20px;font-size:12.3px;color:#1f1f1f;font-weight:normal;width:27px;overflow:hidden;">Kolej</div>
<div class="t" style="left:86.5px;top:416.0px;line-height:20px;font-size:12.3px;color:#1f1f1f;font-weight:normal;">Stawka</div>
<div class="t" style="left:87px;top:437.0px;line-height:20px;font-size:12.3px;color:#1f1f1f;font-weight:normal;">VAT</div>
<div class="t" style="left:172px;top:416.0px;line-height:20px;font-size:12.3px;color:#1f1f1f;font-weight:normal;">Dodatkowa</div>
<div class="t" style="left:172px;top:437.0px;line-height:20px;font-size:12.3px;color:#1f1f1f;font-weight:normal;">stawka VAT</div>
<div class="t" style="left:256.5px;top:416.0px;line-height:20px;font-size:11.85px;color:#1f1f1f;font-weight:normal;">Grupa</div>
<div class="t" style="left:256.5px;top:437.0px;line-height:20px;font-size:11.6px;color:#222;font-weight:bold;">Klasyfikacji</div>
<div class="t" style="left:357px;top:437.0px;line-height:20px;font-size:12.3px;color:#1f1f1f;font-weight:normal;">Vat</div>
<div class="t" style="left:440px;top:416.0px;line-height:20px;font-size:12.3px;color:#1f1f1f;font-weight:normal;">Kwoty</div>
<div class="t" style="left:440px;top:437.0px;line-height:20px;font-size:13.1px;color:#1f1f1f;font-weight:normal;">Netto</div>
<div class="t" style="left:535.5px;top:437.0px;line-height:20px;font-size:11.8px;color:#1f1f1f;font-weight:normal;">VAT</div>
<div class="t" style="left:633px;top:437.0px;line-height:20px;font-size:13px;color:#1f1f1f;font-weight:normal;">Brutto</div>
<div class="t" style="left:750.5px;top:416.0px;line-height:20px;font-size:12.65px;color:#1f1f1f;font-weight:normal;">Kwoty walutowe</div>
<div class="t" style="left:750.5px;top:437.0px;line-height:20px;font-size:12.6px;color:#1f1f1f;font-weight:normal;">Netto</div>
<div class="t" style="left:856.5px;top:437.0px;line-height:20px;font-size:11.8px;color:#1f1f1f;font-weight:normal;">VAT</div>
<div class="t" style="left:949px;top:437.0px;line-height:20px;font-size:13px;color:#1f1f1f;font-weight:normal;">Brutto</div>
<div class="t" style="left:1065.5px;top:416.0px;line-height:20px;font-size:12.3px;color:#1f1f1f;font-weight:normal;">Ręcznie</div>
<div class="t" style="left:1137px;top:416.0px;line-height:20px;font-size:12.3px;color:#1f1f1f;font-weight:normal;">Data</div>
<div class="t" style="left:1137px;top:437.0px;line-height:20px;font-size:12.3px;color:#1f1f1f;font-weight:normal;">VAT</div>
<div class="t" style="left:1220px;top:416.0px;line-height:20px;font-size:12.3px;color:#1f1f1f;font-weight:normal;">Data VAT</div>
<div class="t" style="left:1220px;top:437.0px;line-height:20px;font-size:12.3px;color:#1f1f1f;font-weight:normal;">nieokreślona</div>
<div class="t" style="left:1315px;top:416.0px;line-height:20px;font-size:12.55px;color:#1f1f1f;font-weight:normal;">Szczególny moment</div>
<div class="t" style="left:1315px;top:437.0px;line-height:20px;font-size:12.5px;color:#1f1f1f;font-weight:normal;">podatku VAT</div>
<svg style="left:1440px;top:431px" width="6" height="11" viewBox="0 0 6 11" fill="none" stroke="#c8c8c8" stroke-width="1"><path d="M5.5 0.5 L0.8 5.5 L5.5 10.5"/></svg>
<div class="b" style="left:9px;top:443px;width:13.5px;height:14px;background:#fff;border:1px solid #c9c9c9;"></div>
<div class="b" style="left:0px;top:459.5px;width:1453px;height:213px;background:#fff;"></div>
<div class="b" style="left:31px;top:460px;width:51px;height:23.0px;background:#d5d1cb;"></div>
<div class="b" style="left:82px;top:460px;width:170px;height:23.0px;background:#b9ddf8;"></div>
<div class="b" style="left:435px;top:460px;width:311px;height:23.0px;background:#b9ddf8;"></div>
<div class="b" style="left:746px;top:460px;width:314px;height:23.0px;background:#dfe57a;"></div>
<div class="b" style="left:9.5px;top:464.9px;width:13.5px;height:13.5px;background:#fff;border:1px solid #cdcdcd;"></div>
<div class="b" style="left:1093px;top:464.8px;width:14px;height:14px;background:#fff;border:1px solid #cdcdcd;"></div>
<div class="b" style="left:1258px;top:464.8px;width:14px;height:14px;background:#fff;border:1px solid #cdcdcd;"></div>
<div class="t" style="right:1377px;top:462.0px;line-height:20px;font-size:12.1px;color:#1e1e1e;font-weight:normal;text-align:right;">1</div>
<div class="t" style="left:90px;top:462.0px;line-height:20px;font-size:12.1px;color:#1e1e1e;font-weight:normal;">23%</div>
<div class="t" style="left:260px;top:462.0px;line-height:20px;font-size:12.1px;color:#1e1e1e;font-weight:normal;letter-spacing:-0.3px;">ZPOZ</div>
<div class="t" style="left:359.5px;top:462.0px;line-height:20px;font-size:12.1px;color:#1e1e1e;font-weight:normal;">B</div>
<div class="b" style="left:0px;top:483.0px;width:1453px;height:1px;background:#eeeeee;"></div>
<div class="b" style="left:31px;top:484.0px;width:51px;height:22.639999999999986px;background:#d5d1cb;"></div>
<div class="b" style="left:82px;top:484.0px;width:170px;height:22.639999999999986px;background:#b9ddf8;"></div>
<div class="b" style="left:435px;top:484.0px;width:311px;height:22.639999999999986px;background:#b9ddf8;"></div>
<div class="b" style="left:746px;top:484.0px;width:314px;height:22.639999999999986px;background:#dfe57a;"></div>
<div class="b" style="left:9.5px;top:488.71999999999997px;width:13.5px;height:13.5px;background:#fff;border:1px solid #cdcdcd;"></div>
<div class="b" style="left:1093px;top:488.62px;width:14px;height:14px;background:#fff;border:1px solid #cdcdcd;"></div>
<div class="b" style="left:1258px;top:488.62px;width:14px;height:14px;background:#fff;border:1px solid #cdcdcd;"></div>
<div class="t" style="right:1377px;top:485.82px;line-height:20px;font-size:12.1px;color:#1e1e1e;font-weight:normal;text-align:right;">2</div>
<div class="t" style="left:90px;top:485.82px;line-height:20px;font-size:12.1px;color:#1e1e1e;font-weight:normal;">8%</div>
<div class="t" style="left:260px;top:485.82px;line-height:20px;font-size:12.1px;color:#1e1e1e;font-weight:normal;letter-spacing:-0.3px;">ZPOZ</div>
<div class="t" style="left:359.5px;top:485.82px;line-height:20px;font-size:12.1px;color:#1e1e1e;font-weight:normal;">B</div>
<div class="b" style="left:0px;top:506.64px;width:1453px;height:1px;background:#eeeeee;"></div>
<div class="b" style="left:31px;top:507.64px;width:51px;height:22.639999999999986px;background:#d5d1cb;"></div>
<div class="b" style="left:82px;top:507.64px;width:170px;height:22.639999999999986px;background:#b9ddf8;"></div>
<div class="b" style="left:435px;top:507.64px;width:311px;height:22.639999999999986px;background:#b9ddf8;"></div>
<div class="b" style="left:746px;top:507.64px;width:314px;height:22.639999999999986px;background:#dfe57a;"></div>
<div class="b" style="left:9.5px;top:512.36px;width:13.5px;height:13.5px;background:#fff;border:1px solid #cdcdcd;"></div>
<div class="b" style="left:1093px;top:512.26px;width:14px;height:14px;background:#fff;border:1px solid #cdcdcd;"></div>
<div class="b" style="left:1258px;top:512.26px;width:14px;height:14px;background:#fff;border:1px solid #cdcdcd;"></div>
<div class="t" style="right:1377px;top:509.46000000000004px;line-height:20px;font-size:12.1px;color:#1e1e1e;font-weight:normal;text-align:right;">3</div>
<div class="t" style="left:90px;top:509.46000000000004px;line-height:20px;font-size:12.1px;color:#1e1e1e;font-weight:normal;">5%</div>
<div class="t" style="left:260px;top:509.46000000000004px;line-height:20px;font-size:12.1px;color:#1e1e1e;font-weight:normal;letter-spacing:-0.3px;">ZPOZ</div>
<div class="t" style="left:359.5px;top:509.46000000000004px;line-height:20px;font-size:12.1px;color:#1e1e1e;font-weight:normal;">B</div>
<div class="b" style="left:0px;top:530.28px;width:1453px;height:1px;background:#eeeeee;"></div>
<div class="b" style="left:31px;top:531.28px;width:51px;height:22.639999999999986px;background:#d5d1cb;"></div>
<div class="b" style="left:82px;top:531.28px;width:170px;height:22.639999999999986px;background:#b9ddf8;"></div>
<div class="b" style="left:435px;top:531.28px;width:311px;height:22.639999999999986px;background:#b9ddf8;"></div>
<div class="b" style="left:746px;top:531.28px;width:314px;height:22.639999999999986px;background:#dfe57a;"></div>
<div class="b" style="left:9.5px;top:535.9999999999999px;width:13.5px;height:13.5px;background:#fff;border:1px solid #cdcdcd;"></div>
<div class="b" style="left:1093px;top:535.8999999999999px;width:14px;height:14px;background:#fff;border:1px solid #cdcdcd;"></div>
<div class="b" style="left:1258px;top:535.8999999999999px;width:14px;height:14px;background:#fff;border:1px solid #cdcdcd;"></div>
<div class="t" style="right:1377px;top:533.0999999999999px;line-height:20px;font-size:12.1px;color:#1e1e1e;font-weight:normal;text-align:right;">4</div>
<div class="t" style="left:90px;top:533.0999999999999px;line-height:20px;font-size:12.1px;color:#1e1e1e;font-weight:normal;">4%</div>
<div class="t" style="left:260px;top:533.0999999999999px;line-height:20px;font-size:12.1px;color:#1e1e1e;font-weight:normal;letter-spacing:-0.3px;">ZPOZ</div>
<div class="t" style="left:359.5px;top:533.0999999999999px;line-height:20px;font-size:12.1px;color:#1e1e1e;font-weight:normal;">B</div>
<div class="b" style="left:0px;top:553.92px;width:1453px;height:1px;background:#eeeeee;"></div>
<div class="b" style="left:31px;top:554.92px;width:51px;height:22.639999999999986px;background:#d5d1cb;"></div>
<div class="b" style="left:82px;top:554.92px;width:170px;height:22.639999999999986px;background:#b9ddf8;"></div>
<div class="b" style="left:435px;top:554.92px;width:311px;height:22.639999999999986px;background:#b9ddf8;"></div>
<div class="b" style="left:746px;top:554.92px;width:314px;height:22.639999999999986px;background:#dfe57a;"></div>
<div class="b" style="left:9.5px;top:559.64px;width:13.5px;height:13.5px;background:#fff;border:1px solid #cdcdcd;"></div>
<div class="b" style="left:1093px;top:559.54px;width:14px;height:14px;background:#fff;border:1px solid #cdcdcd;"></div>
<div class="b" style="left:1258px;top:559.54px;width:14px;height:14px;background:#fff;border:1px solid #cdcdcd;"></div>
<div class="t" style="right:1377px;top:556.74px;line-height:20px;font-size:12.1px;color:#1e1e1e;font-weight:normal;text-align:right;">5</div>
<div class="t" style="left:90px;top:556.74px;line-height:20px;font-size:12.1px;color:#1e1e1e;font-weight:normal;">0%</div>
<div class="t" style="left:260px;top:556.74px;line-height:20px;font-size:12.1px;color:#1e1e1e;font-weight:normal;letter-spacing:-0.3px;">ZPOZ</div>
<div class="t" style="left:359.5px;top:556.74px;line-height:20px;font-size:12.1px;color:#1e1e1e;font-weight:normal;">B</div>
<div class="b" style="left:0px;top:577.56px;width:1453px;height:1px;background:#eeeeee;"></div>
<div class="b" style="left:31px;top:578.56px;width:51px;height:22.6400000000001px;background:#d5d1cb;"></div>
<div class="b" style="left:82px;top:578.56px;width:170px;height:22.6400000000001px;background:#b9ddf8;"></div>
<div class="b" style="left:435px;top:578.56px;width:311px;height:22.6400000000001px;background:#b9ddf8;"></div>
<div class="b" style="left:746px;top:578.56px;width:314px;height:22.6400000000001px;background:#dfe57a;"></div>
<div class="b" style="left:9.5px;top:583.28px;width:13.5px;height:13.5px;background:#fff;border:1px solid #cdcdcd;"></div>
<div class="b" style="left:1093px;top:583.18px;width:14px;height:14px;background:#fff;border:1px solid #cdcdcd;"></div>
<div class="b" style="left:1258px;top:583.18px;width:14px;height:14px;background:#fff;border:1px solid #cdcdcd;"></div>
<div class="t" style="right:1377px;top:580.38px;line-height:20px;font-size:12.1px;color:#1e1e1e;font-weight:normal;text-align:right;">6</div>
<div class="t" style="left:90px;top:580.38px;line-height:20px;font-size:12.1px;color:#1e1e1e;font-weight:normal;">NPN</div>
<div class="t" style="left:260px;top:580.38px;line-height:20px;font-size:12.1px;color:#1e1e1e;font-weight:normal;letter-spacing:-0.3px;">NVAT</div>
<div class="t" style="left:359.5px;top:580.38px;line-height:20px;font-size:12.1px;color:#1e1e1e;font-weight:normal;">N</div>
<div class="b" style="left:0px;top:601.2px;width:1453px;height:1px;background:#eeeeee;"></div>
<div class="b" style="left:31px;top:602.2px;width:51px;height:22.639999999999986px;background:#d5d1cb;"></div>
<div class="b" style="left:82px;top:602.2px;width:170px;height:22.639999999999986px;background:#b9ddf8;"></div>
<div class="b" style="left:435px;top:602.2px;width:311px;height:22.639999999999986px;background:#b9ddf8;"></div>
<div class="b" style="left:746px;top:602.2px;width:314px;height:22.639999999999986px;background:#dfe57a;"></div>
<div class="b" style="left:4px;top:602.2px;width:27px;height:22.639999999999986px;background:#efeeec;"></div>
<div class="b" style="left:9px;top:606.92px;width:13.5px;height:13.5px;background:#fff;border:1px solid #cdcdcd;"></div>
<div class="b" style="left:1093px;top:606.8199999999999px;width:14px;height:14px;background:#fff;border:1px solid #cdcdcd;"></div>
<div class="b" style="left:1258px;top:606.8199999999999px;width:14px;height:14px;background:#fff;border:1px solid #cdcdcd;"></div>
<div class="t" style="right:1377px;top:604.02px;line-height:20px;font-size:12.1px;color:#1e1e1e;font-weight:normal;text-align:right;">7</div>
<div class="t" style="left:90px;top:604.02px;line-height:20px;font-size:12.1px;color:#1e1e1e;font-weight:normal;">NPO</div>
<div class="t" style="left:260px;top:604.02px;line-height:20px;font-size:12.1px;color:#1e1e1e;font-weight:normal;letter-spacing:-0.3px;">ZPOZ</div>
<div class="t" style="left:359.5px;top:604.02px;line-height:20px;font-size:12.1px;color:#1e1e1e;font-weight:normal;">B</div>
<div class="t" style="right:927.5px;top:604.02px;line-height:20px;font-size:12.1px;color:#1e1e1e;font-weight:normal;text-align:right;">4 717,00</div>
<div class="t" style="right:829px;top:604.02px;line-height:20px;font-size:12.1px;color:#1e1e1e;font-weight:normal;text-align:right;">0,00</div>
<div class="t" style="right:712px;top:604.02px;line-height:20px;font-size:12.1px;color:#1e1e1e;font-weight:normal;text-align:right;">4 717,00</div>
<div class="t" style="right:606px;top:604.02px;line-height:20px;font-size:12.1px;color:#1e1e1e;font-weight:normal;text-align:right;">1 000,00</div>
<div class="t" style="right:513px;top:604.02px;line-height:20px;font-size:12.1px;color:#1e1e1e;font-weight:normal;text-align:right;">0,00</div>
<div class="t" style="right:397px;top:604.02px;line-height:20px;font-size:12.1px;color:#1e1e1e;font-weight:normal;text-align:right;">1 000,00</div>
<div class="b" style="left:0px;top:624.84px;width:1453px;height:1px;background:#eeeeee;"></div>
<div class="b" style="left:31px;top:625.84px;width:51px;height:22.639999999999986px;background:#d5d1cb;"></div>
<div class="b" style="left:82px;top:625.84px;width:170px;height:22.639999999999986px;background:#b9ddf8;"></div>
<div class="b" style="left:435px;top:625.84px;width:311px;height:22.639999999999986px;background:#b9ddf8;"></div>
<div class="b" style="left:746px;top:625.84px;width:314px;height:22.639999999999986px;background:#dfe57a;"></div>
<div class="b" style="left:9.5px;top:630.5600000000001px;width:13.5px;height:13.5px;background:#fff;border:1px solid #cdcdcd;"></div>
<div class="b" style="left:1093px;top:630.46px;width:14px;height:14px;background:#fff;border:1px solid #cdcdcd;"></div>
<div class="b" style="left:1258px;top:630.46px;width:14px;height:14px;background:#fff;border:1px solid #cdcdcd;"></div>
<div class="t" style="right:1377px;top:627.6600000000001px;line-height:20px;font-size:12.1px;color:#1e1e1e;font-weight:normal;text-align:right;">8</div>
<div class="t" style="left:90px;top:627.6600000000001px;line-height:20px;font-size:12.1px;color:#1e1e1e;font-weight:normal;">OO</div>
<div class="t" style="left:260px;top:627.6600000000001px;line-height:20px;font-size:12.1px;color:#1e1e1e;font-weight:normal;letter-spacing:-0.3px;">STN</div>
<div class="t" style="left:359.5px;top:627.6600000000001px;line-height:20px;font-size:12.1px;color:#1e1e1e;font-weight:normal;">B</div>
<div class="b" style="left:0px;top:648.48px;width:1453px;height:1px;background:#eeeeee;"></div>
<div class="b" style="left:31px;top:649.48px;width:51px;height:22.519999999999982px;background:#d5d1cb;"></div>
<div class="b" style="left:82px;top:649.48px;width:170px;height:22.519999999999982px;background:#b9ddf8;"></div>
<div class="b" style="left:435px;top:649.48px;width:311px;height:22.519999999999982px;background:#b9ddf8;"></div>
<div class="b" style="left:746px;top:649.48px;width:314px;height:22.519999999999982px;background:#dfe57a;"></div>
<div class="b" style="left:9.5px;top:654.14px;width:13.5px;height:13.5px;background:#fff;border:1px solid #cdcdcd;"></div>
<div class="b" style="left:1093px;top:654.04px;width:14px;height:14px;background:#fff;border:1px solid #cdcdcd;"></div>
<div class="b" style="left:1258px;top:654.04px;width:14px;height:14px;background:#fff;border:1px solid #cdcdcd;"></div>
<div class="t" style="right:1377px;top:651.24px;line-height:20px;font-size:12.1px;color:#1e1e1e;font-weight:normal;text-align:right;">9</div>
<div class="t" style="left:90px;top:651.24px;line-height:20px;font-size:12.1px;color:#1e1e1e;font-weight:normal;">ZW</div>
<div class="t" style="left:260px;top:651.24px;line-height:20px;font-size:12.1px;color:#1e1e1e;font-weight:normal;letter-spacing:-0.3px;">ZPOZ</div>
<div class="t" style="left:359.5px;top:651.24px;line-height:20px;font-size:12.1px;color:#1e1e1e;font-weight:normal;">Z</div>
<div class="b" style="left:0px;top:601.5px;width:1453px;height:1px;background:#3d6a88;"></div>
<div class="b" style="left:0px;top:623.5400000000001px;width:1453px;height:1px;background:#3d6a88;"></div>
<div class="b" style="left:1px;top:602.2px;width:3px;height:21.639999999999986px;background:#0a78c2;"></div>
<div class="b" style="left:252px;top:602.7px;width:100px;height:20.639999999999986px;border:2px solid #1a78b4;"></div>
<div class="b" style="left:0px;top:672px;width:1453px;height:1px;background:#e6e6e6;"></div>
<div class="b" style="left:0px;top:674px;width:1453px;height:1px;background:#dcdcdc;"></div>
<div class="b" style="left:0px;top:675px;width:1453px;height:15px;background:#fff;"></div>
<div class="b" style="left:13px;top:679px;width:1409px;height:7px;background:#e3e3e3;"></div>
<svg style="left:4px;top:678px" width="6" height="9" viewBox="0 0 6 9" fill="none" stroke="#d0d0d0" stroke-width="1"><path d="M5 0.5 L1 4.5 L5 8.5"/></svg>
<svg style="left:1442px;top:678px" width="6" height="9" viewBox="0 0 6 9" fill="none" stroke="#d0d0d0" stroke-width="1"><path d="M1 0.5 L5 4.5 L1 8.5"/></svg>
<div class="b" style="left:0px;top:690px;width:1453px;height:1px;background:#dedcd9;"></div>
<div class="b" style="left:1px;top:691px;width:1451px;height:34px;background:#f9f8f6;"></div>
<div class="b" style="left:0px;top:725px;width:1453px;height:1px;background:#e3e1de;"></div>
<div class="b" style="left:1px;top:726px;width:1451px;height:2px;background:#fafafa;border-radius:0 0 8px 8px;"></div>
<div class="b" style="left:17px;top:703px;width:2.2px;height:2.2px;background:#333;"></div>
<div class="b" style="left:17px;top:707.5px;width:2.2px;height:2.2px;background:#333;"></div>
<div class="b" style="left:17px;top:712px;width:2.2px;height:2.2px;background:#333;"></div>
<div class="t" style="left:54.5px;top:699.0px;line-height:20px;font-size:12.1px;color:#555;font-weight:normal;">Stopka VAT - grupy</div>
<div class="t" style="left:200px;top:699.0px;line-height:20px;font-size:11.6px;color:#222;font-weight:bold;">Wymiary kontrolingowe nagłówka</div>
<div class="b" style="left:194px;top:721px;width:201px;height:4px;background:#0a84d0;"></div>
<div class="t" style="left:433px;top:699.0px;line-height:20px;font-size:12.55px;color:#555;font-weight:normal;">Wymiary kontrolingowe linijki</div>
<div class="t" style="left:638.5px;top:699.0px;line-height:20px;font-size:12.5px;color:#555;font-weight:normal;">Rozbicie na wymiary kontrolingowe</div>
<div class="t" style="left:872.5px;top:699.0px;line-height:20px;font-size:13px;color:#555;font-weight:normal;">Notatki</div>
<div class="t" style="left:946.5px;top:699.0px;line-height:20px;font-size:12.45px;color:#555;font-weight:normal;">Podgląd załącznika</div>
<div class="b" style="left:720.5px;top:692px;width:3.5px;height:1px;background:#c4c4c4;"></div>
<div class="b" style="left:725px;top:692px;width:3.5px;height:1px;background:#c4c4c4;"></div>
<div class="b" style="left:729.5px;top:692px;width:3.5px;height:1px;background:#c4c4c4;"></div>
<div class="b" style="left:0;top:0;width:1453px;height:31px;border:1px solid #cfc0b8;border-bottom:none;border-radius:9px 9px 0 0;"></div>
<div class="b" style="left:0;top:30px;width:1453px;height:699px;border:1px solid #aaaaaa;border-top:none;border-right-color:#b3b3b3;border-bottom-color:#8e8e8e;border-radius:0 0 9px 9px;"></div>
</div></body></html>
